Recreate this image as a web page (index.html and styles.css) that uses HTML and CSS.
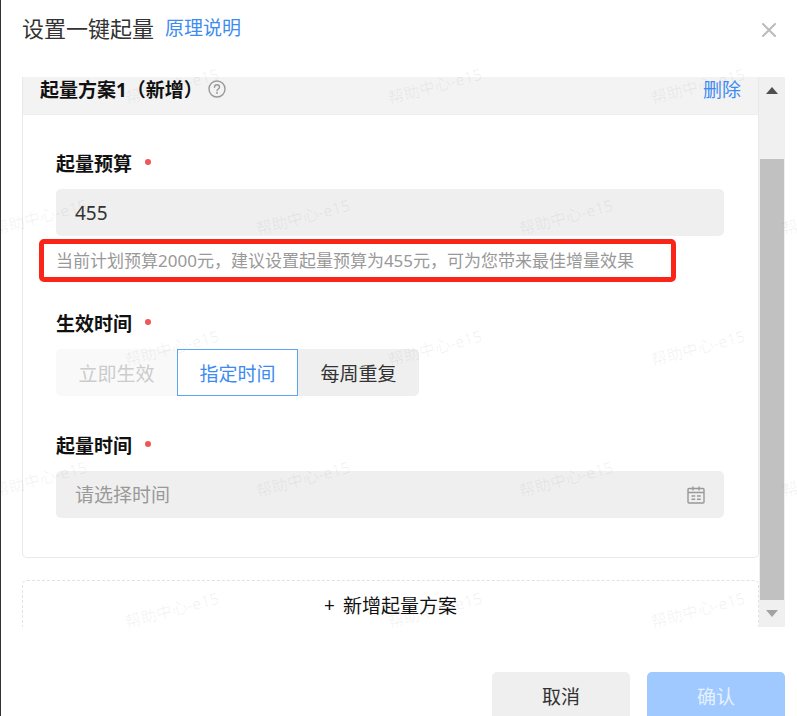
FILE: index.html
```html
<!DOCTYPE html>
<html lang="zh-CN">
<head>
  <meta charset="utf-8">
  <title>设置一键起量</title>
  <link rel="stylesheet" href="styles.css">
</head>
<body>
  <div class="dialog">
    <header class="dialog-header">
      <h1>设置一键起量</h1>
      <a href="#" class="link">原理说明</a>
      <button type="button" class="close" aria-label="关闭">
        <svg width="16" height="16" viewBox="0 0 16 16"><path d="M2 2l12 12M14 2L2 14" fill="none" stroke="#bbb" stroke-width="2" stroke-linecap="round"/></svg>
      </button>
    </header>

    <div class="dialog-body">
      <div class="content">
        <section class="plan">
          <div class="plan-header">
            <h2>起量方案1（新增）</h2>
            <svg class="help" width="18" height="18" viewBox="0 0 18 18" fill="none" stroke="#999" stroke-width="1.4">
              <circle cx="9" cy="9" r="8"/>
              <path d="M6.5 7.2c0-3.2 5-3.2 5 0 0 1.8-2.5 1.8-2.5 3.6" stroke-linecap="round"/>
              <circle cx="9" cy="13" r=".9" fill="#999" stroke="none"/>
            </svg>
            <a href="#" class="link remove">删除</a>
          </div>

          <form class="plan-form">
            <label class="field-label" for="budget">起量预算</label>
            <input class="text-box" id="budget" type="text" value="455">
            <p class="hint">当前计划预算2000元，建议设置起量预算为455元，可为您带来最佳增量效果</p>

            <span class="field-label" id="effect-label">生效时间</span>
            <div class="segments" role="group" aria-labelledby="effect-label">
              <button type="button" disabled>立即生效</button>
              <button type="button" class="active" aria-pressed="true">指定时间</button>
              <button type="button">每周重复</button>
            </div>

            <label class="field-label last" for="time">起量时间</label>
            <div class="text-box date-box">
              <input id="time" type="text" placeholder="请选择时间">
              <svg width="18" height="18" viewBox="0 0 18 18" fill="none" stroke="#999" stroke-width="1.4">
                <rect x="1" y="2.5" width="16" height="14.5" rx="1"/>
                <path d="M1 6.5h16M6 .5v4M12 .5v4M4.5 10h3.7M10 10h3.7M4.5 13.3h3.7M10 13.3h3.7"/>
              </svg>
            </div>
          </form>
        </section>

        <button type="button" class="add-plan"><span>+</span>新增起量方案</button>
      </div>

      <div class="scrollbar">
        <svg width="12" height="7" viewBox="0 0 12 7"><path d="M0 7L6 0l6 7z" fill="#505050"/></svg>
        <div class="track"><div class="thumb"></div></div>
        <svg width="12" height="7" viewBox="0 0 12 7"><path d="M0 0h12L6 7z" fill="#a3a3a3"/></svg>
      </div>
    </div>

    <footer class="dialog-footer">
      <button type="button" class="btn">取消</button>
      <button type="button" class="btn primary">确认</button>
    </footer>

    <div class="watermark" aria-hidden="true">
      <div class="mark-row"><span>帮助中心-e15</span><span>帮助中心-e15</span><span>帮助中心-e15</span></div>
      <div class="mark-row shifted"><span>帮助中心-e15</span><span>帮助中心-e15</span><span>帮助中心-e15</span><span>帮助中心-e15</span></div>
      <div class="mark-row"><span>帮助中心-e15</span><span>帮助中心-e15</span><span>帮助中心-e15</span></div>
      <div class="mark-row shifted"><span>帮助中心-e15</span><span>帮助中心-e15</span><span>帮助中心-e15</span><span>帮助中心-e15</span></div>
      <div class="mark-row"><span>帮助中心-e15</span><span>帮助中心-e15</span><span>帮助中心-e15</span></div>
    </div>
  </div>
</body>
</html>
```
FILE: styles.css
```css
* {
  box-sizing: border-box;
}

body {
  margin: 0;
  height: 100vh;
  overflow: hidden;
  background: #fff;
  border-left: 1px solid #333;
}

body, button, input {
  font-family: "Noto Sans", "Noto Sans CJK SC", sans-serif;
  font-size: 19px;
  color: #333;
}

h1, h2, p {
  margin: 0;
}

button {
  border: 0;
  padding: 0;
  cursor: pointer;
}

.dialog {
  position: relative;
  padding: 0 12px 0 21px;
}

.link {
  color: #3d8bf2;
  text-decoration: none;
}

/* header */
.dialog-header {
  display: flex;
  align-items: center;
  gap: 11px;
  height: 53px;
  margin-bottom: 24px;
}

.dialog-header h1 {
  font-size: 22px;
  font-weight: 400;
}

.close {
  display: flex;
  margin-left: auto;
  margin-right: 8px;
  margin-top: 6px;
  background: none;
}

/* scrolling area */
.dialog-body {
  display: flex;
  height: 550px;
  overflow: hidden;
}

.content {
  flex: 1;
}

.plan {
  border: 1px solid #e8e9eb;
  border-top: 0;
  border-radius: 0 0 5px 5px;
}

.plan-header {
  display: flex;
  align-items: center;
  height: 38px;
  padding: 0 17px 14px 17px;
  background: #f3f3f3;
  border-bottom: 1px solid #eee;
}

.plan-header h2 {
  font-size: 19px;
  font-weight: 700;
  color: #111;
}

.help {
  margin-left: 5px;
}

.remove {
  margin-left: auto;
}

.plan-form {
  padding: 34px 34px 39px 33px;
}

.field-label {
  display: flex;
  align-items: center;
  height: 28px;
  margin-bottom: 12px;
  font-weight: 700;
  color: #111;
}

.field-label::after {
  content: "";
  width: 6px;
  height: 6px;
  margin-left: 13px;
  margin-bottom: 3px;
  border-radius: 50%;
  background: #f25555;
}

.field-label.last {
  margin-top: 35px;
}

.text-box {
  display: block;
  width: 100%;
  height: 47px;
  padding: 0 19px;
  border: 0;
  border-radius: 5px;
  background: #efefef;
}

.date-box {
  display: flex;
  align-items: center;
}

.date-box input {
  flex: 1;
  min-width: 0;
  padding: 0;
  border: 0;
  background: none;
}

.date-box input::placeholder {
  color: #999;
}

.hint {
  height: 43px;
  margin: 3px 48px 27px -17px;
  padding-left: 12px;
  border: 5px solid #fa2418;
  border-radius: 5px;
  font-size: 17px;
  line-height: 33px;
  white-space: nowrap;
  color: #999;
}

.segments {
  display: flex;
}

.segments button {
  width: 121px;
  height: 47px;
  background: #efefef;
}

.segments button:first-child {
  border-radius: 5px 0 0 5px;
}

.segments button:last-child {
  border-radius: 0 5px 5px 0;
}

.segments button:disabled {
  background: #f9f9f9;
  color: #ccc;
}

.segments .active {
  border: 1px solid #5ba5f5;
  background: #fff;
  color: #3d8bf2;
}

.add-plan {
  display: flex;
  justify-content: center;
  align-items: center;
  gap: 8px;
  width: 100%;
  height: 50px;
  margin-top: 22px;
  border: 1px dashed #e2e2e2;
  border-radius: 5px;
  background: #fff;
  color: #111;
}

.scrollbar {
  display: flex;
  flex-direction: column;
  align-items: center;
  justify-content: space-between;
  width: 26px;
  padding: 10px 1px;
  background: #f0f0f0;
}

.track {
  display: flex;
  flex-direction: column;
  justify-content: flex-end;
  flex: 1;
  align-self: stretch;
  margin: 10px 0;
}

.thumb {
  height: 89%;
  background: #c1c1c1;
}

/* footer */
.dialog-footer {
  display: flex;
  justify-content: flex-end;
  gap: 17px;
  margin-top: 45px;
}

.btn {
  width: 138px;
  height: 48px;
  border-radius: 5px;
  background: #efefef;
}

.btn.primary {
  background: #a0c9ff;
  color: #e6f1ff;
}

/* repeated diagonal mark over the whole dialog */
.watermark {
  position: absolute;
  top: 74px;
  left: 0;
  right: 0;
  display: flex;
  flex-direction: column;
  gap: 107px;
  overflow: hidden;
  padding: 12px 0;
  margin-top: -12px;
  pointer-events: none;
}

.mark-row {
  display: flex;
  gap: 163px;
  margin-left: 121px;
}

.mark-row.shifted {
  margin-left: -11px;
}

.mark-row span {
  flex: none;
  width: 100px;
  height: 24px;
  font-size: 16px;
  line-height: 24px;
  text-align: center;
  color: rgba(0, 0, 0, 0.06);
  transform: rotate(-15deg);
}
```
